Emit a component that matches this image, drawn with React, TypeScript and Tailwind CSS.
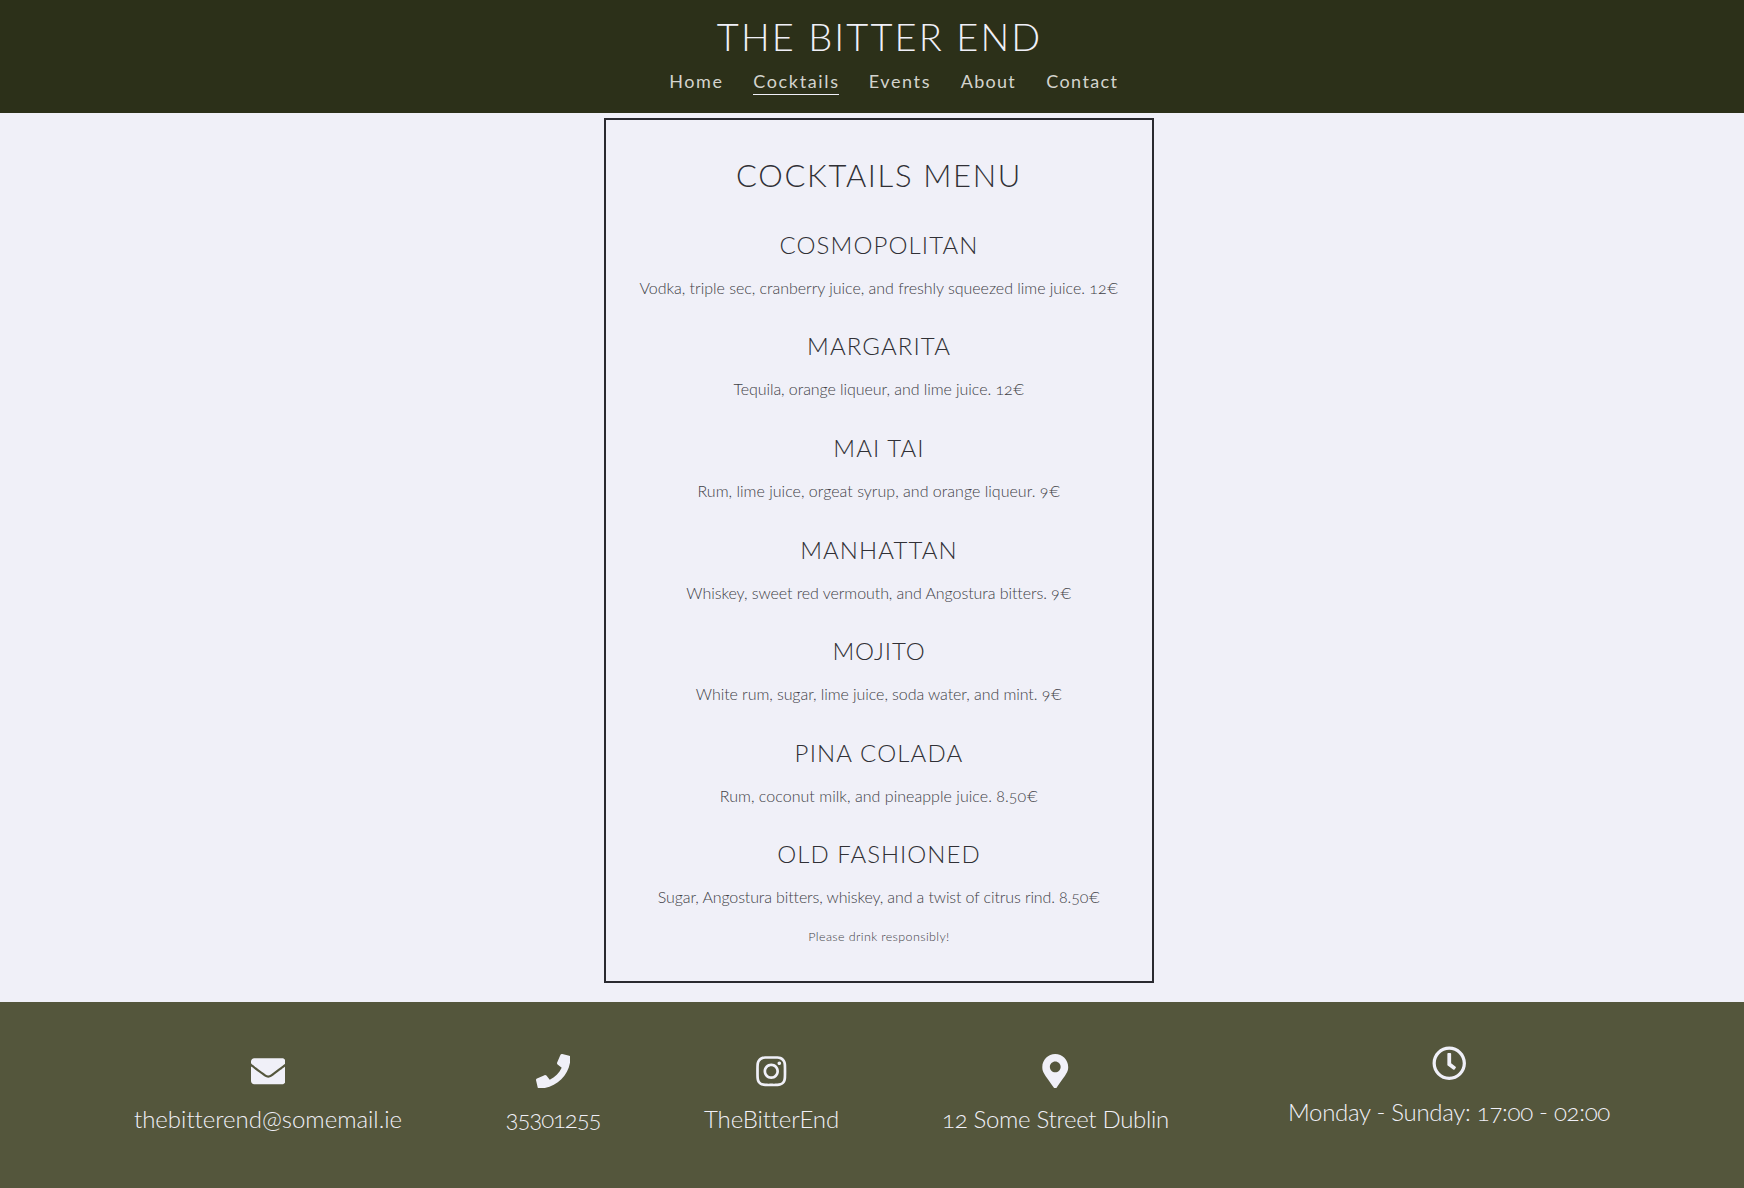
import {
  FaEnvelope,
  FaInstagram,
  FaMapMarkerAlt,
  FaPhone,
  FaRegClock,
} from "react-icons/fa";

const navItems = [
  { label: "Home", style: "w-[54px] tracking-[1.6px]" },
  { label: "Cocktails", style: "w-[85.5px] tracking-[1.65px] border-b border-[#f0f0f8]" },
  { label: "Events", style: "w-[62px] tracking-[1.6px]" },
  { label: "About", style: "w-[55.5px] tracking-[1.25px]" },
  { label: "Contact", style: "w-[72px] tracking-[1.4px]" },
];

const drinks = [
  {
    name: "COSMOPOLITAN",
    text: "Vodka, triple sec, cranberry juice, and freshly squeezed lime juice. 12",
    nameStyle: "tracking-[1.1px]",
    textStyle: "tracking-[-0.03px]",
  },
  {
    name: "MARGARITA",
    text: "Tequila, orange liqueur, and lime juice. 12",
    nameStyle: "tracking-[1.1px]",
    textStyle: "tracking-[-0.06px]",
  },
  {
    name: "MAI TAI",
    text: "Rum, lime juice, orgeat syrup, and orange liqueur. 9",
    nameStyle: "tracking-[1.1px]",
    textStyle: "tracking-[0.02px]",
  },
  {
    name: "MANHATTAN",
    text: "Whiskey, sweet red vermouth, and Angostura bitters. 9",
    nameStyle: "tracking-[1.1px]",
    textStyle: "tracking-[-0.07px]",
  },
  {
    name: "MOJITO",
    text: "White rum, sugar, lime juice, soda water, and mint. 9",
    nameStyle: "tracking-[0.9px]",
    textStyle: "tracking-[-0.07px]",
  },
  {
    name: "PINA COLADA",
    text: "Rum, coconut milk, and pineapple juice. 8.50",
    nameStyle: "tracking-[1.15px]",
    textStyle: "tracking-[0.04px]",
  },
  {
    name: "OLD FASHIONED",
    text: "Sugar, Angostura bitters, whiskey, and a twist of citrus rind. 8.50",
    nameStyle: "tracking-[1px]",
    textStyle: "tracking-[-0.12px]",
  },
];

const contacts = [
  { Icon: FaEnvelope, text: "thebitterend@somemail.ie", box: "w-[267px]", textStyle: "tracking-[-0.02px]" },
  { Icon: FaPhone, text: "35301255", box: "w-[95px]", textStyle: "tracking-[-1.1px]" },
  { Icon: FaInstagram, text: "TheBitterEnd", box: "w-[134px]", textStyle: "tracking-[-0.1px]" },
  { Icon: FaMapMarkerAlt, text: "12 Some Street Dublin", box: "w-[226px]", textStyle: "tracking-[-0.3px]" },
  { Icon: FaRegClock, text: "Monday - Sunday: 17:00 - 02:00", box: "ml-4 -mt-[7.5px] w-[321px]", textStyle: "tracking-[-0.3px]" },
];

export default function App() {
  return (
    <div className="flex h-[1188px] flex-col bg-[#f0f0f8] font-['Lato','Open_Sans',sans-serif] font-light oldstyle-nums">
      <header className="flex h-[112.5px] shrink-0 flex-col items-center bg-[#2c3019] pt-4 pl-[13px] text-[#f0f0f8]">
        <h1 className="pl-0.5 text-[38px] leading-10 tracking-[2.1px] whitespace-nowrap">
          THE BITTER END
        </h1>
        <nav className="mt-[13px] flex gap-[30px] pl-[30.5px] text-[18px] leading-[25px] font-normal text-[#d4d4ce]">
          {navItems.map((item) => (
            <a key={item.label} href="#" className={`whitespace-nowrap ${item.style}`}>
              {item.label}
            </a>
          ))}
        </nav>
      </header>

      <main className="flex h-[889px] shrink-0 justify-center pt-[5.4px] pl-[13px]">
        <section className="flex h-[865px] w-[550px] flex-col items-center border-2 border-[#2a2a30] pt-[36px] text-[#303036]">
          <h2 className="mb-[36px] pl-px text-[31px] leading-[38px] tracking-[1.65px] whitespace-nowrap">
            COCKTAILS MENU
          </h2>
          {drinks.map((drink) => (
            <article key={drink.name} className="h-[101.55px] shrink-0 text-center whitespace-nowrap">
              <h3 className={`pl-px text-[24px] leading-[30px] ${drink.nameStyle}`}>{drink.name}</h3>
              <p className={`mt-4 pl-px text-[16px] leading-6 text-[#404046] ${drink.textStyle}`}>
                {drink.text}
                <span className="lining-nums">€</span>
              </p>
            </article>
          ))}
          <p className="-mt-[13px] pl-px text-[12.5px] leading-[18px] tracking-[0.38px] text-[#404046]">
            Please drink responsibly!
          </p>
        </section>
      </main>

      <footer className="flex flex-1 gap-[104px] bg-[#54563c] pt-[52px] pl-[134.5px] text-[#f0f0f8]">
        {contacts.map(({ Icon, text, box, textStyle }) => (
          <div key={text} className={`flex flex-col items-center whitespace-nowrap ${box}`}>
            <Icon className="size-[34.5px]" />
            <p className={`mt-4 text-[24px] leading-[30px] ${textStyle}`}>{text}</p>
          </div>
        ))}
      </footer>
    </div>
  );
}
